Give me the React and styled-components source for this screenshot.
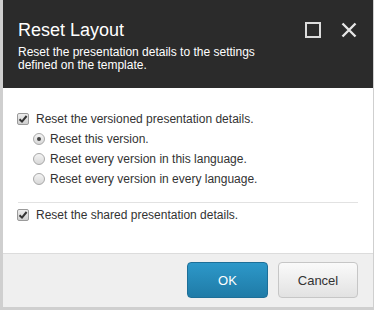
import React from "react";
import styled, { createGlobalStyle } from "styled-components";

const GlobalStyle = createGlobalStyle`
  html, body {
    margin: 0;
    padding: 0;
    background: #cfcfcf;
    font-family: "Liberation Sans", Arial, sans-serif;
  }
`;

const options = [
  { label: "Reset this version.", checked: true },
  { label: "Reset every version in this language.", checked: false },
  { label: "Reset every version in every language.", checked: false },
];

function CheckIcon() {
  return (
    <svg width="10" height="10" viewBox="0 0 10 10">
      <path d="M1.5 5.2 L4 7.6 L8.6 2" fill="none" stroke="#333333" strokeWidth="2" />
    </svg>
  );
}

function App() {
  return (
    <Page>
      <GlobalStyle />
      <Dialog>
        <Header>
          <TitleRow>
            <Title>Reset Layout</Title>
            <Controls>
              <IconButton aria-label="Maximize">
                <svg width="16" height="16" viewBox="0 0 16 16">
                  <rect x="1" y="1" width="14" height="14" fill="none" stroke="#dcdcdc" strokeWidth="2" />
                </svg>
              </IconButton>
              <IconButton aria-label="Close">
                <svg width="16" height="16" viewBox="0 0 16 16">
                  <path d="M1.5 1.5 L14.5 14.5 M14.5 1.5 L1.5 14.5" stroke="#e6e6e6" strokeWidth="2.4" />
                </svg>
              </IconButton>
            </Controls>
          </TitleRow>
          <Subtitle>Reset the presentation details to the settings defined on the template.</Subtitle>
        </Header>

        <Body>
          <Row>
            <Checkbox><CheckIcon /></Checkbox>
            <span>Reset the versioned presentation details.</span>
          </Row>
          {options.map((o) => (
            <RadioRow key={o.label}>
              <Radio $checked={o.checked} />
              <span>{o.label}</span>
            </RadioRow>
          ))}
          <Separator />
          <Row>
            <Checkbox><CheckIcon /></Checkbox>
            <span>Reset the shared presentation details.</span>
          </Row>
        </Body>

        <Footer>
          <PrimaryButton>OK</PrimaryButton>
          <Button>Cancel</Button>
        </Footer>
      </Dialog>
    </Page>
  );
}

export default App;

const Page = styled.div`
  width: 374px;
  height: 310px;
  padding-left: 3px;
  box-sizing: border-box;
  overflow: hidden;
`;

const Dialog = styled.div`
  width: 370px;
  height: 307px;
  display: flex;
  flex-direction: column;
  background: #ffffff;
`;

const Header = styled.div`
  height: 88px;
  box-sizing: border-box;
  background: #2b2b2b;
  padding: 19px 16px 0 15px;
  color: #ffffff;
`;

const TitleRow = styled.div`
  display: flex;
  justify-content: space-between;
  align-items: flex-start;
`;

const Title = styled.h1`
  margin: 0;
  font-size: 18px;
  line-height: 22px;
  font-weight: normal;
`;

const Controls = styled.div`
  display: flex;
  gap: 20px;
  padding-top: 3px;
`;

const IconButton = styled.div`
  width: 16px;
  height: 16px;
  display: flex;
  svg { display: block; }
`;

const Subtitle = styled.p`
  margin: 5px 0 0;
  width: 262px;
  font-size: 12px;
  line-height: 13px;
`;

const Body = styled.div`
  flex: 1;
  padding: 21px 15px 0 14px;
  font-size: 12px;
  color: #333333;
`;

const Row = styled.div`
  display: flex;
  align-items: center;
  height: 20px;
  line-height: 20px;
`;

const RadioRow = styled(Row)`
  padding-left: 16px;
`;

const Checkbox = styled.span`
  width: 12px;
  height: 12px;
  box-sizing: border-box;
  margin-right: 7px;
  border: 1px solid #9a9a9a;
  border-radius: 2px;
  background: linear-gradient(#ededed, #cfcfcf);
  display: flex;
  align-items: center;
  justify-content: center;
  svg { display: block; }
`;

const Radio = styled.span`
  width: 12px;
  height: 12px;
  box-sizing: border-box;
  margin-right: 5px;
  border: 1px solid #a8a8a8;
  border-radius: 50%;
  background: linear-gradient(#f4f4f4, #d8d8d8);
  display: flex;
  align-items: center;
  justify-content: center;

  &::after {
    content: "";
    width: 4px;
    height: 4px;
    border-radius: 50%;
    background: #444444;
    display: ${(p) => (p.$checked ? "block" : "none")};
  }
`;

const Separator = styled.div`
  height: 1px;
  background: #e2e2e2;
  margin: 13px 0 2px 1px;
`;

const Footer = styled.div`
  height: 54px;
  box-sizing: border-box;
  border-top: 1px solid #dcdcdc;
  background: #efefef;
  padding: 8px 15px 0 0;
  display: flex;
  justify-content: flex-end;
  align-items: flex-start;
  gap: 10px;
`;

const Button = styled.button`
  width: 80px;
  height: 36px;
  border: 1px solid #c6c6c6;
  border-radius: 4px;
  background: linear-gradient(#fafafa, #e2e2e2);
  color: #333333;
  font-family: "Liberation Sans", Arial, sans-serif;
  font-size: 13px;
  padding: 0;
`;

const PrimaryButton = styled(Button)`
  width: 81px;
  border-color: #1d6f98;
  background: linear-gradient(#2d98c9, #1f7ba7);
  color: #ffffff;
`;
